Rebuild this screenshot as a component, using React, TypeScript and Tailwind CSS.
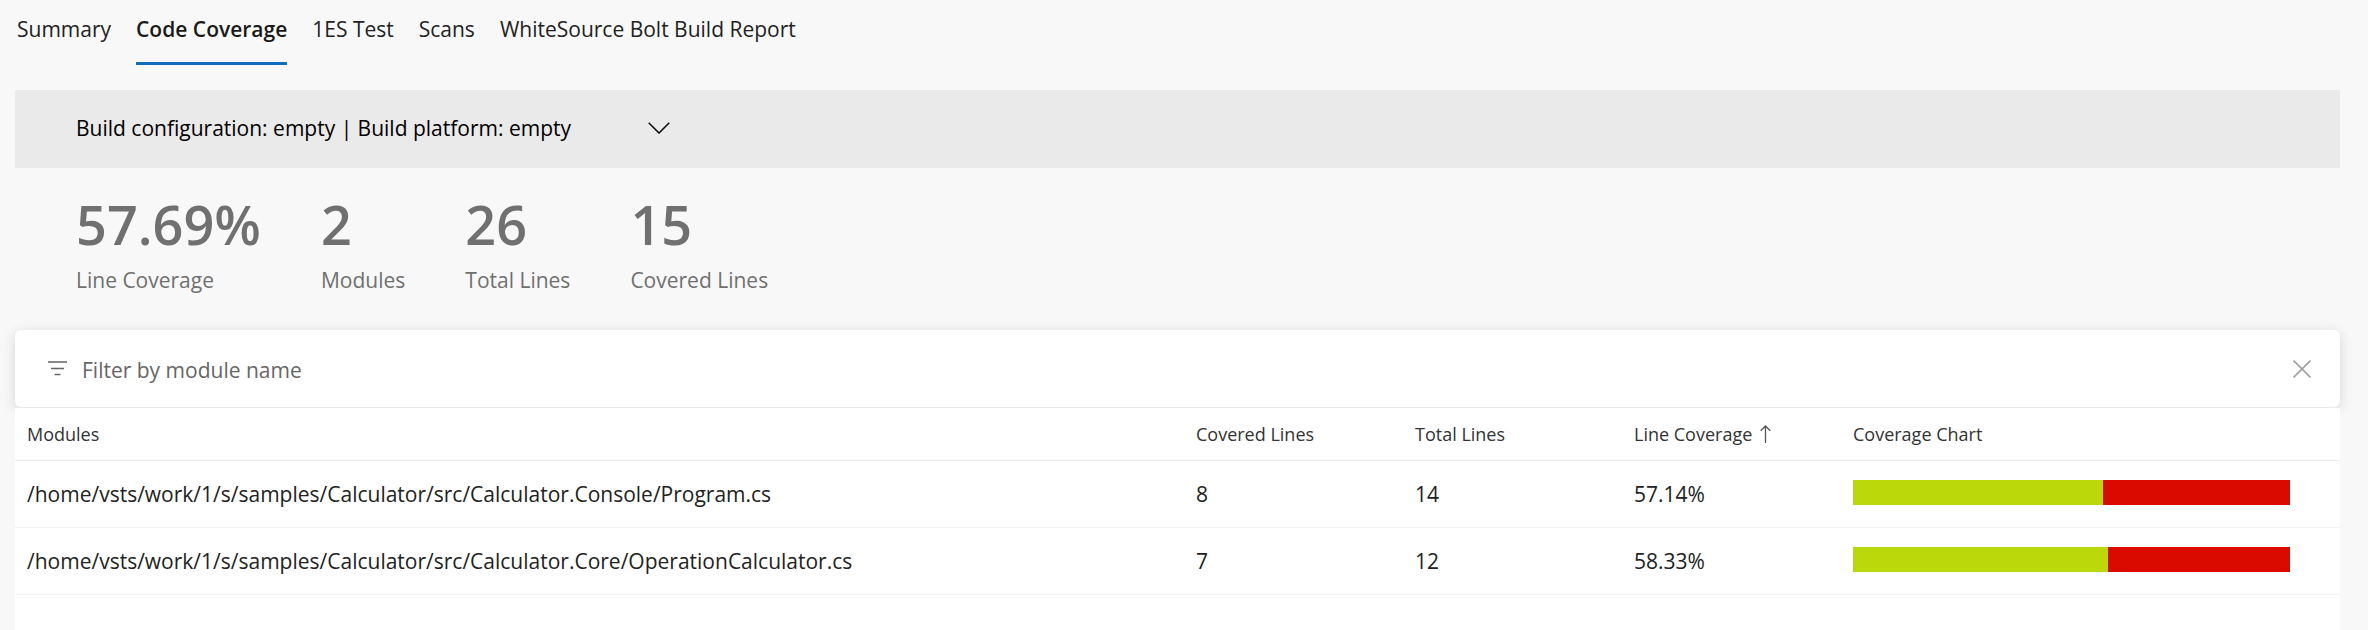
import { useState } from "react";

const tabs = ["Summary", "Code Coverage", "1ES Test", "Scans", "WhiteSource Bolt Build Report"];

const stats = [
  { value: "57.69%", label: "Line Coverage" },
  { value: "2", label: "Modules" },
  { value: "26", label: "Total Lines" },
  { value: "15", label: "Covered Lines" },
];

const modules = [
  { name: "/home/vsts/work/1/s/samples/Calculator/src/Calculator.Console/Program.cs", covered: 8, total: 14 },
  { name: "/home/vsts/work/1/s/samples/Calculator/src/Calculator.Core/OperationCalculator.cs", covered: 7, total: 12 },
];

function Tabs() {
  const [active, setActive] = useState("Code Coverage");
  return (
    <div role="tablist" className="flex gap-[25px] pl-[2px]">
      {tabs.map((tab) => (
        <button
          key={tab}
          type="button"
          role="tab"
          aria-selected={tab === active}
          onClick={() => setActive(tab)}
          className={
            tab === active
              ? "h-[65px] border-b-3 border-[#106ebe] pb-1 font-semibold whitespace-nowrap text-[#1a1a1a]"
              : "h-[65px] border-b-3 border-transparent pb-1 whitespace-nowrap text-[#222222]"
          }
        >
          {tab}
        </button>
      ))}
    </div>
  );
}

function ConfigurationPicker() {
  return (
    <div className="mt-[25px] flex h-[78px] items-center bg-[#eaeaea] pb-[2px] pl-[61px]">
      <div className="relative flex items-center">
        <select
          aria-label="Build configuration"
          className="w-[600px] appearance-none bg-transparent text-black outline-none"
        >
          <option>Build configuration: empty | Build platform: empty</option>
        </select>
        <svg
          aria-hidden="true"
          className="pointer-events-none absolute right-[6px] h-3 w-[22px]"
          viewBox="0 0 22 12"
          fill="none"
          stroke="#111"
          strokeWidth="1.6"
        >
          <path d="M.7.7 11 11 21.300.7" />
        </svg>
      </div>
    </div>
  );
}

function Stats() {
  return (
    <dl className="flex gap-[60px] pt-6 pb-[32px] pl-[61px] text-[#707070]">
      {stats.map((stat) => (
        <div key={stat.label} className="flex flex-col-reverse">
          <dt className="pt-[6px] leading-[36px]">{stat.label}</dt>
          <dd className="text-[54px] leading-[64px] font-semibold">{stat.value}</dd>
        </div>
      ))}
    </dl>
  );
}

function FilterBar({ value, onChange }: { value: string; onChange: (value: string) => void }) {
  return (
    <div className="flex h-[77px] items-center rounded-md bg-white pr-[29px] pl-[33px] shadow-[0_3px_14px_rgba(0,0,0,0.14)]">
      <svg aria-hidden="true" className="h-[15px] w-[19px]" viewBox="0 0 19 15" stroke="#666" strokeWidth="1.5">
        <path d="M0 1h19M3 7.500h13M6.500 13.500h6" />
      </svg>
      <input
        aria-label="Filter by module name"
        placeholder="Filter by module name"
        value={value}
        onChange={(event) => onChange(event.target.value)}
        className="ml-[15px] min-w-0 flex-1 bg-transparent pt-[2px] text-[#222222] outline-none placeholder:text-[#666666]"
      />
      <button type="button" aria-label="Clear filter" onClick={() => onChange("")}>
        <svg aria-hidden="true" className="size-[18px]" viewBox="0 0 18 18" fill="none" stroke="#a0a0a0" strokeWidth="1.6">
          <path d="m.5.5 17 17M17.500.5l-17 17" />
        </svg>
      </button>
    </div>
  );
}

function CoverageBar({ covered, total }: { covered: number; total: number }) {
  return (
    <div role="img" aria-label={`${covered} of ${total} lines covered`} className="mr-[38px] flex h-[25px] bg-[#da0a00]">
      <div className="bg-[#bad80a]" style={{ width: `${(covered / total) * 100}%` }} />
    </div>
  );
}

function ModuleTable({ filter }: { filter: string }) {
  const [ascending, setAscending] = useState(true);
  const rows = modules
    .filter((row) => row.name.toLowerCase().includes(filter.toLowerCase()))
    .sort((a, b) => (a.covered / a.total - b.covered / b.total) * (ascending ? 1 : -1));
  return (
    <div className="flex-1 bg-white">
      <table className="w-full table-fixed border-collapse text-left text-[#222222]">
        <colgroup>
          <col />
          <col className="w-[219px]" />
          <col className="w-[219px]" />
          <col className="w-[219px]" />
          <col className="w-[499px]" />
        </colgroup>
        <thead>
          <tr className="h-[53px] border-y border-[#eaeaea] text-[18px] text-[#333333]">
            <th className="px-3 font-normal">Modules</th>
            <th className="px-3 font-normal">Covered Lines</th>
            <th className="px-3 font-normal">Total Lines</th>
            <th className="px-3 font-normal" aria-sort={ascending ? "ascending" : "descending"}>
              <button type="button" className="flex items-center gap-2" onClick={() => setAscending(!ascending)}>
                Line Coverage
                <svg
                  aria-hidden="true"
                  className={ascending ? "h-[18px] w-[11px]" : "h-[18px] w-[11px] rotate-180"}
                  viewBox="0 0 11 18"
                  fill="none"
                  stroke="#555"
                  strokeWidth="1.3"
                >
                  <path d="M5.500 18V1M.7 5.800l4.800-4.800 4.800 4.800" />
                </svg>
              </button>
            </th>
            <th className="px-3 font-normal">Coverage Chart</th>
          </tr>
        </thead>
        <tbody>
          {rows.map((row) => (
            <tr key={row.name} className="h-[67px] border-b border-[#f3f3f3]">
              <td className="truncate px-3">{row.name}</td>
              <td className="px-3">{row.covered}</td>
              <td className="px-3">{row.total}</td>
              <td className="px-3">{((row.covered / row.total) * 100).toFixed(2)}%</td>
              <td className="px-3 pb-1">
                <CoverageBar covered={row.covered} total={row.total} />
              </td>
            </tr>
          ))}
        </tbody>
      </table>
    </div>
  );
}

export default function App() {
  const [filter, setFilter] = useState("");
  return (
    <main className="flex min-h-screen flex-col bg-[#f8f8f8] pr-7 pl-[15px] font-['Open_Sans','Noto_Sans',sans-serif] text-[21px] leading-[30px]">
      <Tabs />
      <ConfigurationPicker />
      <Stats />
      <FilterBar value={filter} onChange={setFilter} />
      <ModuleTable filter={filter} />
    </main>
  );
}
